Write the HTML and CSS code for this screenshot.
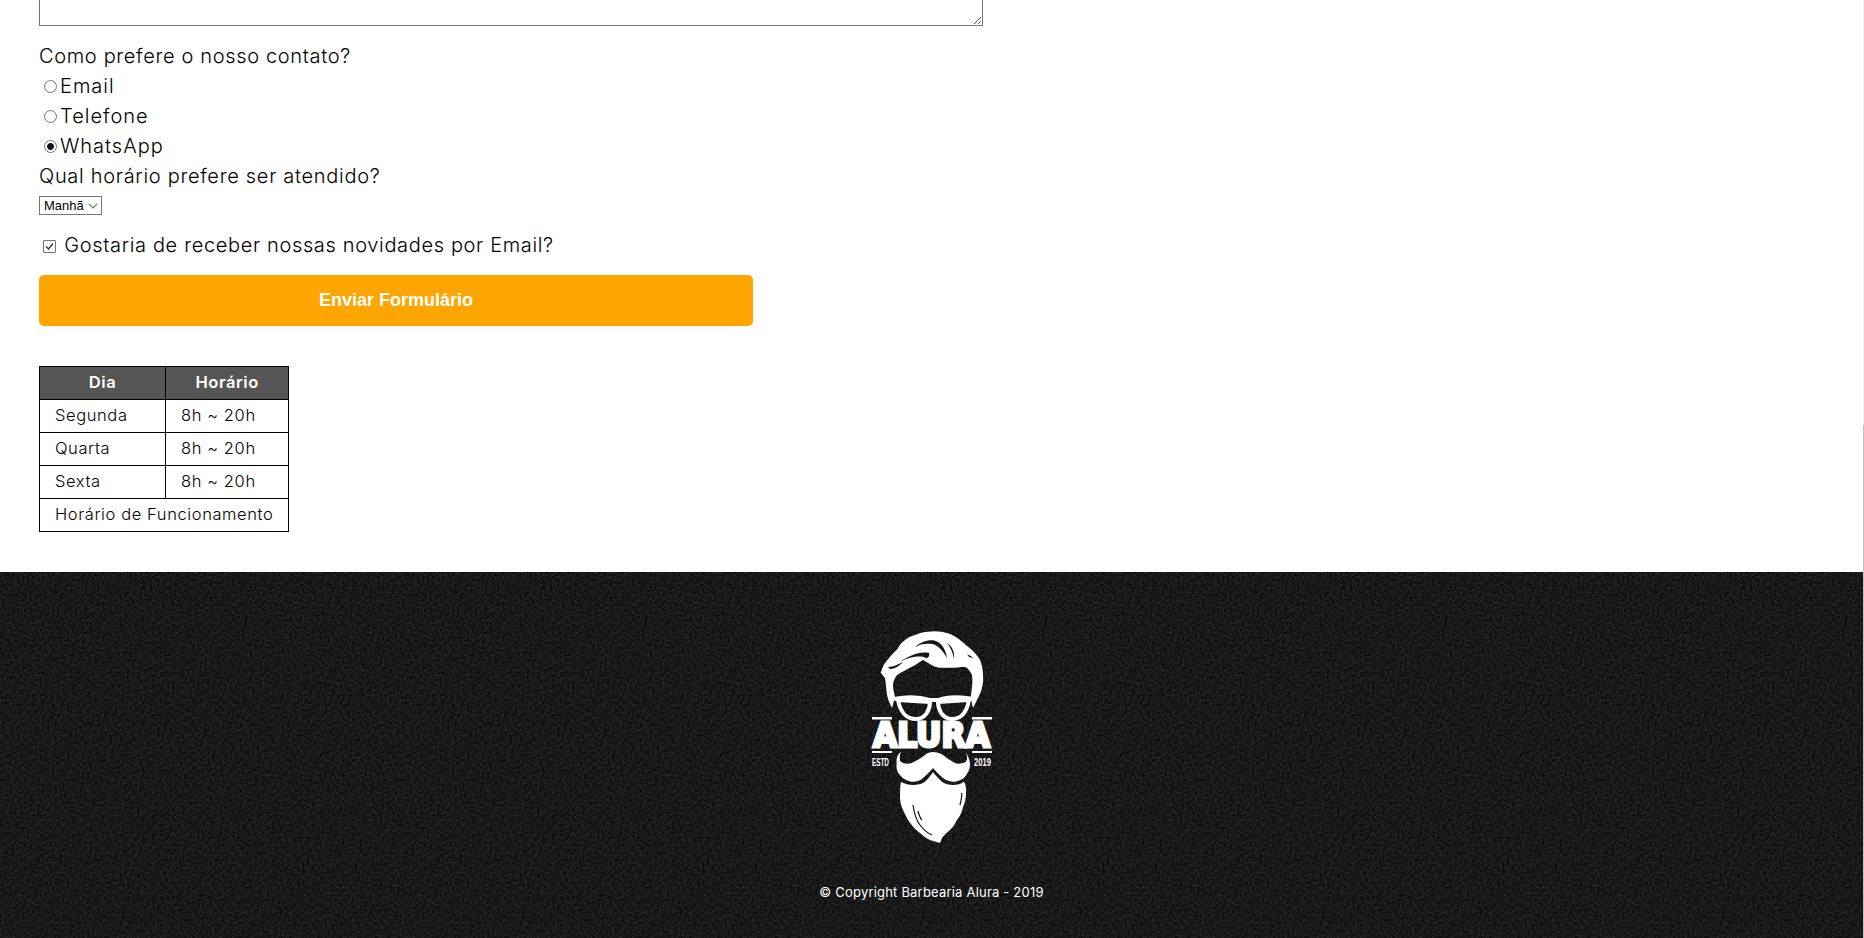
FILE: index.html
```html
<!DOCTYPE html>
<html lang="pt-BR">
<head>
    <meta charset="UTF-8">
    <title>Barbearia Alura - Contato</title>
    <link rel="stylesheet" href="styles.css">
</head>
<body>

<main class="principal">
    <form class="formulario">
        <textarea class="mensagem" cols="70" rows="5"></textarea>

        <fieldset class="grupo">
            <legend class="titulo">Como prefere o nosso contato?</legend>
            <label class="opcao"><input type="radio" name="contato">Email</label>
            <label class="opcao"><input type="radio" name="contato">Telefone</label>
            <label class="opcao"><input type="radio" name="contato" checked>WhatsApp</label>
        </fieldset>

        <label class="titulo titulo-horario" for="horario">Qual horário prefere ser atendido?</label>
        <select class="horario" id="horario">
            <option>Manhã</option>
            <option>Tarde</option>
            <option>Noite</option>
        </select>

        <label class="novidades"><input type="checkbox" checked> Gostaria de receber nossas novidades por Email?</label>

        <button class="enviar" type="button">Enviar Formulário</button>
    </form>

    <table class="tabela">
        <thead>
            <tr>
                <th>Dia</th>
                <th>Horário</th>
            </tr>
        </thead>
        <tbody>
            <tr>
                <td>Segunda</td>
                <td>8h ~ 20h</td>
            </tr>
            <tr>
                <td>Quarta</td>
                <td>8h ~ 20h</td>
            </tr>
            <tr>
                <td>Sexta</td>
                <td>8h ~ 20h</td>
            </tr>
            <tr>
                <td colspan="2">Horário de Funcionamento</td>
            </tr>
        </tbody>
    </table>
</main>

<footer class="rodape">
    <svg class="logo" viewBox="0 0 124 216" width="124" height="216" aria-label="Barbearia Alura">
        <!-- cabelo -->
        <path fill="#fff" d="M10.7 43.7 C12 40 13 37 15 34 L20 27.7 L28 19.3 C29 17 31 14 33 12.7 C37 9 41 7 45 6 C49 4 54 3 58 2.7 C65 1.5 72 2.5 78 4.3 C83 6 88 9 92 12.7 L102 21 C105 24 108 27 110 31 C112 36 113 41 113 46 C113.5 51 113 55 112 59 C111 63 109 67 107 71 L103 79 C102 75 101 71 101 66 C102 59 103 52 102 46 C100 42 98 39 95 38 C90 38 84 39 78 38.7 C73 39 69 39 65 37.7 C61 36 57 33 53 31 C49 33 46 36 42 37.7 C37 40 32 43 27 46 C25 49 23 52 23 56 C23 60 24 64 25 67.7 L22 79 C20 75 18 71 17 66 C16 60 16 54 15 49 Z"/>
        <path fill="#161616" d="M18 38 C24 38 28 35 33 33 C28 38 24 40 20 40 Z"/>
        <path fill="#161616" d="M31 32 C38 28 48 22 59 24 C60 27 58 29 56 29 C50 26 40 28 31 32 Z"/>
        <path fill="#161616" d="M45 18 C52 12 62 9 68 13 C74 17 76 23 77 29 C73 22 68 16 62 15 C56 14 50 15 45 18 Z"/>
        <path fill="#161616" d="M77 14 C82 17 85 23 84 30 C83 24 81 19 77 14 Z"/>
        <path fill="#161616" d="M97 25 L104 29 L99 28 Z"/>
        <!-- oculos -->
        <path fill="none" stroke="#fff" stroke-width="4" d="M24 70 C40 67 50 68 60 71 L68 71 C76 68 88 67 104 70"/>
        <path fill="none" stroke="#fff" stroke-width="4" d="M28 71 L60 73 C60 80 56 90 46 90 C36 90 30 82 28 71 Z"/>
        <path fill="none" stroke="#fff" stroke-width="4" d="M99 71 L68 73 C68 80 72 90 82 90 C92 90 97 82 99 71 Z"/>
        <!-- faixas -->
        <rect fill="#fff" x="2" y="88" width="20" height="2.5"/>
        <rect fill="#fff" x="102" y="88" width="20" height="2.5"/>
        <rect fill="#fff" x="2" y="122" width="20" height="2"/>
        <rect fill="#fff" x="102" y="122" width="20" height="2"/>
        <text class="logo-nome" transform="translate(3 118) scale(0.95 1)">ALURA</text>
        <text class="logo-data" transform="translate(2 137) scale(0.55 1)">ESTD</text>
        <text class="logo-data" transform="translate(104 137) scale(0.66 1)">2019</text>
        <!-- bigode -->
        <path fill="#fff" d="M30.7 122.7 C27 126 26 130 26.7 134 C26 139 27 143 30 146 C33 150 37 152 41.7 152.7 C46 153 50 152 53 149 C57 146 60 142 63 139 C66 142 69 146 73 149 C77 152 81 153 85 152.7 C89 152 93 150 95 147.7 C98 144 100 140 100 136 C100 131 98 126 95 122.7 C97 125 97.5 128 96.7 131 C96 133 94.5 134 93 134 C90 135 87 135 85 134 C81 132 77 129 73 126 C70 124 66 123 63 123 C60 123 57 124 55 126 C51 129 46 132 41.7 134 C39 135 36 135 33 134 C31 133 30 132 30 131 C29.5 128 30 125 30.7 122.7 Z"/>
        <!-- barba -->
        <path fill="#fff" d="M31 152.7 C35 155 39 156 43 156 C47 156 52 155 55 152.7 C58 150 61 146 63 143 C65 146 69 150 72 152.7 C75 155 79 156 83 156 C87 156 91 155 94 152.7 C96 156 96.5 160 96 164 C96 169 95 174 93 178 C92 183 90 187 87 191 C85 195 83 198 80 201 C77 204 74 206 72 209 L70 214 C67 213 63 212 60 211 C56 209 53 207 50 204 C46 201 43 198 40 194 C37 190 35 185 33 181 C31 177 30 172 30 168 C30 163 30 157 31 152.7 Z"/>
        <path fill="none" stroke="#161616" stroke-width="1.2" d="M43 176 C44 183 46 191 50 196 C53 200 57 204 62 206 M48 182 C49 186 50 189 52 191 M91.7 164 C92 168 91 172 90 176"/>
    </svg>
    <p class="copyright">© Copyright Barbearia Alura - 2019</p>
</footer>

<div class="barra"><div class="barra-polegar"></div></div>

</body>
</html>
```
FILE: styles.css
```css
html, body {
    height: 938px;
    overflow: hidden;
}
body {
    margin: 0;
    font-family: "Inter", "Open Sans", sans-serif;
    font-weight: 300;
    background-color: #fff;
    color: #000;
}
.principal {
    height: 572px;
    padding-left: 39px;
    overflow: hidden;
    box-sizing: border-box;
}
.formulario {
    display: block;
    margin-top: -95px;
}
.mensagem {
    display: block;
    box-sizing: border-box;
    width: 944px;
    height: 121px;
    margin-bottom: 15px;
    border: 1px solid #767676;
}
.grupo {
    margin: 0;
    padding: 0;
    border: 0;
}
.titulo {
    display: block;
    padding: 0;
    font-size: 20px;
    line-height: 30px;
    letter-spacing: 0.66px;
}
.titulo-horario {
    letter-spacing: 0.7px;
}
.opcao {
    display: block;
    font-size: 20px;
    line-height: 30px;
    letter-spacing: 1px;
}
input[type="radio"] {
    appearance: none;
    box-sizing: border-box;
    width: 13px;
    height: 13px;
    margin: 0 3px 0 5px;
    vertical-align: 0;
    border: 1px solid #767676;
    border-radius: 50%;
    background-color: #fff;
}
input[type="radio"]:checked {
    background: radial-gradient(circle, #111 0, #111 3px, #fff 3.8px);
}
input[type="checkbox"] {
    appearance: none;
    box-sizing: border-box;
    width: 13px;
    height: 13px;
    margin: 0 2px 0 4px;
    vertical-align: -1px;
    border: 1px solid #767676;
    border-radius: 1px;
    background: #fff url("data:image/svg+xml,%3Csvg xmlns='http://www.w3.org/2000/svg' width='11' height='11'%3E%3Cpath d='M2 5.5 L4.5 8 L9 2.5' fill='none' stroke='%23333' stroke-width='1.3'/%3E%3C/svg%3E") no-repeat center;
}
.horario {
    display: block;
    appearance: none;
    box-sizing: border-box;
    width: 63px;
    height: 19px;
    margin-top: 5px;
    padding: 0 0 0 4px;
    border: 1px solid #767676;
    border-radius: 0;
    background: #fff url("data:image/svg+xml,%3Csvg xmlns='http://www.w3.org/2000/svg' width='10' height='6'%3E%3Cpath d='M1 1 L5 5 L9 1' fill='none' stroke='%23777' stroke-width='1.2'/%3E%3C/svg%3E") no-repeat right 3px center;
    color: #000;
    font-family: "Liberation Sans", Arial, sans-serif;
    font-size: 13px;
    font-weight: 400;
}
.novidades {
    display: block;
    margin-top: 15px;
    font-size: 20px;
    line-height: 30px;
    letter-spacing: 0.65px;
}
.enviar {
    display: block;
    width: 714px;
    height: 51px;
    margin-top: 15px;
    border: none;
    border-radius: 5px;
    background-color: #ffa500;
    color: #fff;
    font-family: "Liberation Sans", Arial, sans-serif;
    font-size: 18px;
    font-weight: bold;
}
.tabela {
    margin-top: 40px;
    border-collapse: collapse;
    font-size: 16.5px;
    letter-spacing: 0.6px;
}
.tabela th, .tabela td {
    border: 1px solid #000;
    height: 30px;
    padding: 0 15px 2px;
    text-align: left;
}
.tabela th {
    background-color: #555;
    color: #fff;
    font-weight: 600;
    text-align: center;
}
.tabela th:first-child {
    width: 95px;
}
.rodape {
    height: 366px;
    box-sizing: border-box;
    margin-right: 1px;
    padding-top: 57px;
    text-align: center;
    background-color: #262626;
    background-image: url("data:image/svg+xml,%3Csvg xmlns='http://www.w3.org/2000/svg' width='400' height='400'%3E%3Cfilter id='n'%3E%3CfeTurbulence type='fractalNoise' baseFrequency='0.4' numOctaves='3' seed='4' stitchTiles='stitch'/%3E%3CfeColorMatrix values='0 0 0 0 0 0 0 0 0 0 0 0 0 0 0 0 0 0 1.5 -0.4'/%3E%3C/filter%3E%3Crect width='400' height='400' filter='url(%23n)'/%3E%3C/svg%3E");
    color: #fff;
}
.logo {
    display: block;
    margin: 0 auto;
}
.logo-nome {
    fill: #fff;
    font-family: "DejaVu Sans", sans-serif;
    font-size: 33px;
    font-weight: bold;
    stroke: #fff;
    stroke-width: 3px;
}
.logo-data {
    fill: #fff;
    font-family: "Liberation Sans", sans-serif;
    font-size: 11.5px;
    font-weight: bold;
}
.copyright {
    margin: 39px 0 0;
    font-size: 13px;
    font-weight: 400;
    letter-spacing: 0.2px;
}
.barra {
    position: absolute;
    top: 0;
    right: 0;
    width: 1px;
    height: 938px;
    background-color: #f1f1f1;
}
.barra-polegar {
    position: absolute;
    bottom: 0;
    width: 1px;
    height: 513px;
    background-color: #c1c1c1;
}
```
